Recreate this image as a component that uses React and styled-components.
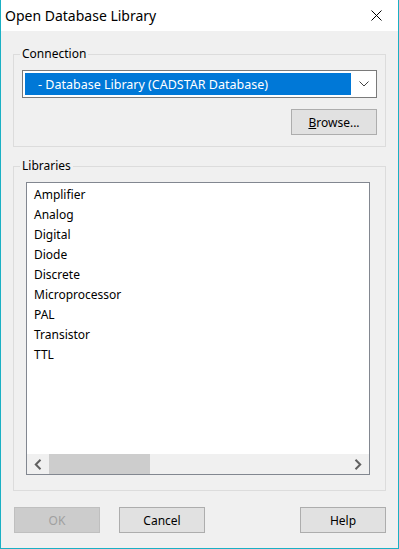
import React from 'react'
import styled, { createGlobalStyle } from 'styled-components'

const GlobalStyle = createGlobalStyle`
  * {
    box-sizing: border-box;
  }

  html,
  body {
    margin: 0;
    padding: 0;
    background: #ffffff;
  }

  body {
    font-family: "Noto Sans", "Open Sans", sans-serif;
    font-size: 12px;
    color: #000000;
  }
`

const libraries = [
  'Amplifier',
  'Analog',
  'Digital',
  'Diode',
  'Discrete',
  'Microprocessor',
  'PAL',
  'Transistor',
  'TTL',
]

const App = () => {
  return (
    <>
      <GlobalStyle />
      <Window>
        <TitleBar>
          <Title>Open Database Library</Title>
          <CloseButton>
            <svg width="11" height="11" viewBox="0 0 11 11">
              <path d="M0.5 0.5 L10.5 10.5 M10.5 0.5 L0.5 10.5" stroke="#000" strokeWidth="1" />
            </svg>
          </CloseButton>
        </TitleBar>

        <Body>
          <Group>
            <Legend>Connection</Legend>
            <Combo>
              <ComboValue>- Database Library (CADSTAR Database)</ComboValue>
              <ComboArrow>
                <svg width="10" height="6" viewBox="0 0 10 6">
                  <path d="M0.5 0.5 L5 5 L9.5 0.5" fill="none" stroke="#404040" strokeWidth="1" />
                </svg>
              </ComboArrow>
            </Combo>
            <BrowseRow>
              <Button>
                <u>B</u>rowse...
              </Button>
            </BrowseRow>
          </Group>

          <Group $top={11} $bottom={15}>
            <Legend>Libraries</Legend>
            <ListBox>
              <Items>
                {libraries.map((name) => (
                  <Item key={name}>{name}</Item>
                ))}
              </Items>
              <HScroll>
                <ScrollArrow>
                  <svg width="8" height="11" viewBox="0 0 8 11">
                    <path d="M6.5 0.8 L1.8 5.5 L6.5 10.2" fill="none" stroke="#606060" strokeWidth="2" />
                  </svg>
                </ScrollArrow>
                <Track>
                  <Thumb />
                </Track>
                <ScrollArrow>
                  <svg width="8" height="11" viewBox="0 0 8 11">
                    <path d="M1.5 0.8 L6.2 5.5 L1.5 10.2" fill="none" stroke="#606060" strokeWidth="2" />
                  </svg>
                </ScrollArrow>
              </HScroll>
            </ListBox>
          </Group>

          <ButtonRow>
            <Button disabled>OK</Button>
            <Button>Cancel</Button>
            <Spacer />
            <Button>Help</Button>
          </ButtonRow>
        </Body>
      </Window>
    </>
  )
}

const Window = styled.div`
  width: 399px;
  height: 549px;
  border: 1px solid #1ab0c4;
  border-top: none;
  background: #f0f0f0;
  display: flex;
  flex-direction: column;
`

const TitleBar = styled.div`
  height: 31px;
  background: #ffffff;
  display: flex;
  align-items: center;
  justify-content: space-between;
  padding-left: 4px;
`

const Title = styled.div`
  font-size: 14px;
  color: #000000;
`

const CloseButton = styled.div`
  width: 43px;
  height: 31px;
  display: flex;
  align-items: center;
  justify-content: center;
`

const Body = styled.div`
  padding: 15px 12px 0 12px;
  display: flex;
  flex-direction: column;
`

const Group = styled.fieldset`
  margin: ${(p) => p.$top || 0}px 0 0 0;
  padding: 0 8px ${(p) => p.$bottom || 11}px 8px;
  border: 1px solid #dcdcdc;
  min-width: 0;
`

const Legend = styled.legend`
  padding: 0 2px;
  margin-left: -2px;
  line-height: 16px;
`

const Combo = styled.div`
  margin-top: 8px;
  height: 28px;
  border: 1px solid #7a7a7a;
  background: #ffffff;
  padding: 2px;
  display: flex;
  align-items: stretch;
`

const ComboValue = styled.div`
  flex: 1;
  background: #0078d7;
  color: #ffffff;
  font-size: 12.5px;
  display: flex;
  align-items: center;
  padding-left: 13px;
  white-space: nowrap;
`

const ComboArrow = styled.div`
  width: 23px;
  display: flex;
  align-items: center;
  justify-content: center;
  padding-left: 2px;
`

const BrowseRow = styled.div`
  margin-top: 11px;
  display: flex;
  justify-content: flex-end;
`

const Button = styled.button`
  width: 86px;
  height: 26px;
  margin: 0;
  padding: 0;
  font-family: inherit;
  font-size: 12px;
  color: ${(p) => (p.disabled ? '#a0a0a0' : '#000000')};
  background: ${(p) => (p.disabled ? '#cccccc' : '#e1e1e1')};
  border: 1px solid ${(p) => (p.disabled ? '#bfbfbf' : '#adadad')};
  border-radius: 0;

  u {
    text-decoration: underline;
  }
`

const ListBox = styled.div`
  margin: 8px 7px 0 4px;
  height: 293px;
  border: 1px solid #828790;
  background: #ffffff;
  display: flex;
  flex-direction: column;
`

const Items = styled.div`
  flex: 1;
  padding: 2px 0 0 7px;
`

const Item = styled.div`
  height: 20px;
  line-height: 20px;
`

const HScroll = styled.div`
  height: 20px;
  background: #f0f0f0;
  display: flex;
`

const ScrollArrow = styled.div`
  width: 22px;
  display: flex;
  align-items: center;
  justify-content: center;
`

const Track = styled.div`
  flex: 1;
  display: flex;
`

const Thumb = styled.div`
  width: 101px;
  background: #cdcdcd;
`

const ButtonRow = styled.div`
  margin: 16px 0 0 1px;
  display: flex;
  gap: 19px;
`

const Spacer = styled.div`
  flex: 1;
`

export default App
